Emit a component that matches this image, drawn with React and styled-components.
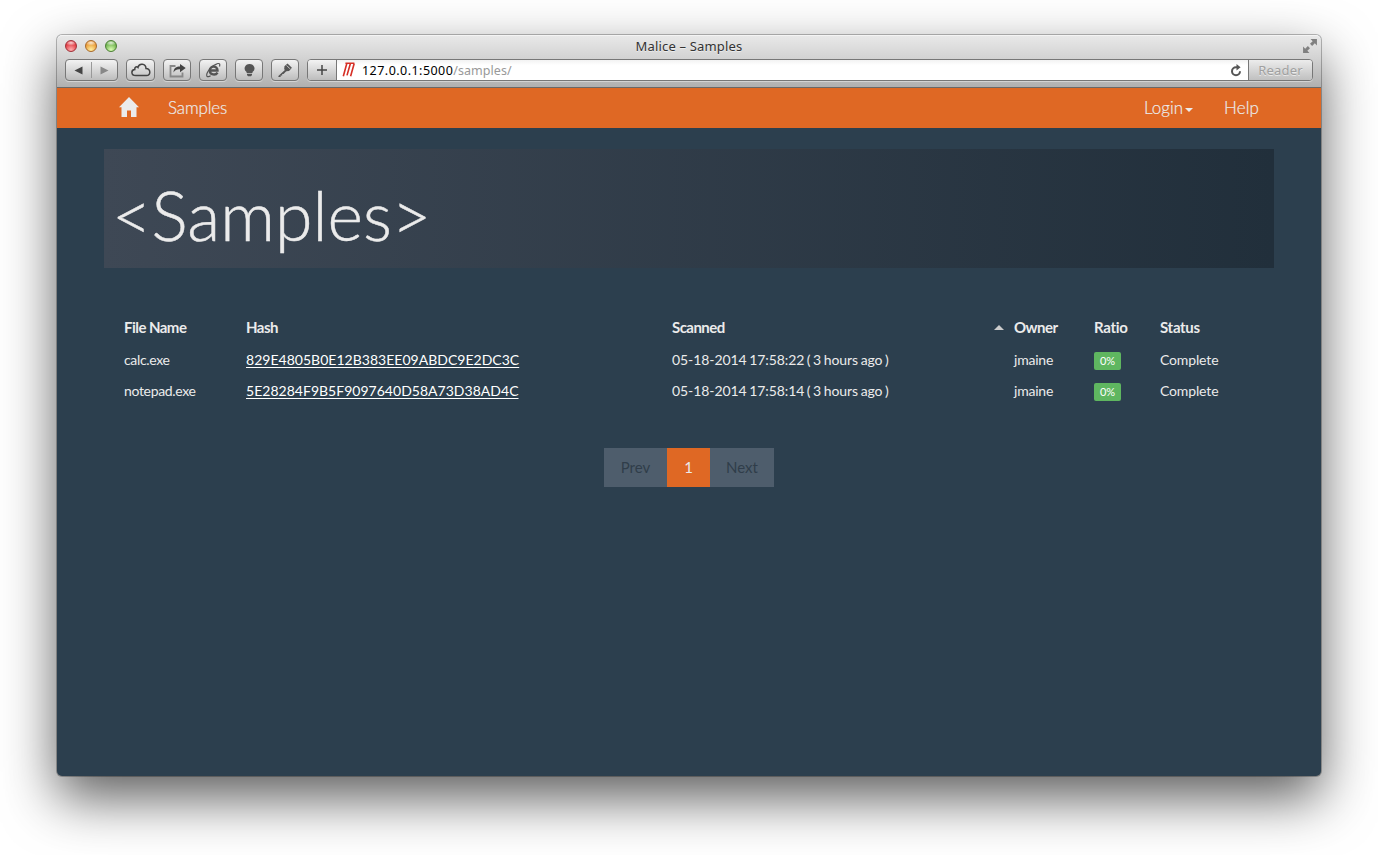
import React from "react";
import styled, { createGlobalStyle } from "styled-components";

const GlobalStyle = createGlobalStyle`
  * { box-sizing: border-box; }
  html, body { margin: 0; background: #fff; }
  body { overflow: hidden; }
`;

const Desktop = styled.div`
  width: 1378px;
  height: 855px;
  padding: 35px 57px 79px;
  overflow: hidden;
  background: #fff;
`;

const Window = styled.div`
  display: flex;
  flex-direction: column;
  height: 741px;
  border-radius: 5px;
  background: #2c3f4e;
  box-shadow: 0 0 0 1px rgba(0, 0, 0, 0.26), 0 22px 54px rgba(0, 0, 0, 0.64);
`;

const Chrome = styled.header`
  flex: none;
  height: 53px;
  padding: 0 8px;
  border-radius: 5px 5px 0 0;
  border-bottom: 1px solid #696969;
  box-shadow: inset 0 1px 0 #f4f4f4;
  background: linear-gradient(#e9e9e9, #d2d2d2 46%, #b0b0b0);
  font-family: "Noto Sans", sans-serif;
`;

const TitleBar = styled.div`
  display: grid;
  grid-template-columns: 1fr auto 1fr;
  align-items: center;
  height: 24px;
`;

const Lights = styled.div`
  display: flex;
  gap: 8px;
  margin-top: -2px;
`;

const Light = styled.i`
  width: 12px;
  height: 12px;
  border-radius: 50%;
  border: 1px solid ${(p) => p.$edge};
  background: radial-gradient(ellipse 60% 28% at 50% 18%, #fffc, #fff0),
    radial-gradient(circle at 50% 88%, ${(p) => p.$glow}, ${(p) => p.$fill} 70%);
`;

const Title = styled.h1`
  margin: -2px 0 0;
  font-size: 13px;
  line-height: 20px;
  font-weight: 400;
  letter-spacing: 0.17px;
  color: #333;
  text-shadow: 0 1px 0 #fff8;
`;

const Expand = styled.svg`
  justify-self: end;
  margin: -3px -5px 0 0;
`;

const Toolbar = styled.div`
  display: flex;
  gap: 8px;
`;

const ToolButton = styled.span`
  display: flex;
  align-items: center;
  justify-content: center;
  width: ${(p) => p.$w || 28}px;
  height: 22px;
  border: 1px solid #777;
  border-radius: 4px;
  background: linear-gradient(#f3f3f3, #bdbdbd);
  box-shadow: 0 1px 0 #ffffff66;
`;

const Address = styled.div`
  display: flex;
  flex: 1;
  height: 22px;
  border: 1px solid #777;
  border-radius: 4px;
  overflow: hidden;
  background: linear-gradient(#f2f2f2, #fff 5px);
  box-shadow: 0 1px 0 #ffffff66;
`;

const AddTab = styled.span`
  display: flex;
  align-items: center;
  justify-content: center;
  width: 29px;
  border-right: 1px solid #777;
  background: linear-gradient(#f3f3f3, #bdbdbd);
`;

const Url = styled.span`
  display: flex;
  flex: 1;
  align-items: center;
  padding: 1px 6px 0 5px;
  font-size: 12.5px;
  line-height: 18px;
  color: #000;
  white-space: pre;

  svg:first-child { margin: -2px 6px 0 0; }
  svg:last-child { margin-left: auto; }
`;

const Host = styled.span`
  letter-spacing: 0.46px;
`;

const Path = styled.span`
  color: #999;
  letter-spacing: 0.04px;
`;

const Reader = styled.span`
  width: 64px;
  border-left: 1px solid #777;
  background: linear-gradient(#ececec, #c0c0c0);
  color: #a0a0a0;
  font-size: 13px;
  line-height: 20px;
  letter-spacing: 0.2px;
  text-align: center;
  text-shadow: 0 1px 0 #fff9;
`;

const Page = styled.main`
  font-family: Lato, sans-serif;
  color: #ebebeb;
`;

const Nav = styled.nav`
  display: flex;
  align-items: center;
  height: 40px;
  padding: 0 62px;
  background: #df6824;
  font-size: 17px;
  font-weight: 300;
  line-height: 40px;
`;

const NavLink = styled.a`
  display: flex;
  align-items: center;
  margin-left: ${(p) => p.$left || 0};
  letter-spacing: ${(p) => p.$track || 0}px;
  -webkit-text-stroke: 0.2px #ebebeb;
`;

const HomeIcon = styled.svg`
  margin-top: -2px;
`;

const Caret = styled.i`
  margin: ${(p) => (p.$up ? 1 : 4)}px 0 0 ${(p) => p.$gap || 0}px;
  border-style: solid;
  border-color: ${(p) => (p.$up ? "transparent transparent #ccc" : "#ebebeb transparent transparent")};
  border-width: ${(p) => (p.$up ? "0 5px 5px" : "4px 4px 0")};
`;

const Container = styled.div`
  padding: 21px 47px 0;
`;

const Hero = styled.section`
  height: 119px;
  padding: 28px 8px 0;
  background: linear-gradient(90deg, #3e4855, #212f3b);
`;

const Heading = styled.h2`
  margin: 0;
  font-size: 68px;
  line-height: 75px;
  font-weight: 300;
  -webkit-text-stroke: 0.5px #ebebeb;
`;

const Table = styled.table`
  width: 1130px;
  margin: 43px 20px 0;
  border-collapse: collapse;
  table-layout: fixed;
  font-size: 14px;
  line-height: 20px;
  text-align: left;
`;

const HeadCell = styled.th`
  width: ${(p) => p.$w}px;
  height: 33px;
  padding: 0 0 2px;
  font-size: 15px;
  font-weight: 700;
  letter-spacing: ${(p) => p.$track || -0.54}px;
`;

const Sortable = styled.span`
  display: flex;
  align-items: center;
  justify-content: space-between;
  padding-right: 10px;
`;

const Cell = styled.td`
  height: 31px;
  padding: 0;
  white-space: pre;
  letter-spacing: ${(p) => p.$track || 0}px;
  word-spacing: ${(p) => p.$word || 0}px;
`;

const HashLink = styled.a`
  color: #fff;
  text-decoration: underline;
  text-underline-offset: 2px;
  text-decoration-skip-ink: none;
`;

const Badge = styled.span`
  display: inline-block;
  width: 27px;
  height: 18px;
  margin-top: 2px;
  vertical-align: middle;
  border-radius: 2px;
  background: #5fb660;
  color: #fff;
  font-size: 11px;
  line-height: 18px;
  text-align: center;
`;

const Pager = styled.div`
  display: flex;
  justify-content: center;
  margin-top: 42px;
  font-size: 15px;
  line-height: 39px;
  text-align: center;
`;

const PageItem = styled.span`
  width: ${(p) => p.$w}px;
  height: 39px;
  background: ${(p) => (p.$active ? "#df6824" : "#4e5d6c")};
  color: ${(p) => (p.$active ? "#ebebeb" : "#303d4a")};
`;

const samples = [
  ["calc.exe", "829E4805B0E12B383EE09ABDC9E2DC3C", "05-18-2014 17:58:22 ( 3 hours ago )"],
  ["notepad.exe", "5E28284F9B5F9097640D58A73D38AD4C", "05-18-2014 17:58:14 ( 3 hours ago )"],
];

const Triangle = ({ flip, color }) => (
  <svg width="9" height="9" viewBox="0 0 9 9">
    <path d={flip ? "M.5 .5 8.5 4.5 .5 8.5Z" : "M8.5 .5 .5 4.5 8.5 8.5Z"} fill={color} />
  </svg>
);

const Divider = styled.i`
  width: 1px;
  height: 16px;
  margin: 0 8px;
  background: #999;
`;

export default function App() {
  return (
    <Desktop>
      <GlobalStyle />
      <Window>
        <Chrome>
          <TitleBar>
            <Lights>
              <Light $edge="#a03038" $fill="#df343c" $glow="#ffb0b0" />
              <Light $edge="#a8692a" $fill="#e8952f" $glow="#fff0a0" />
              <Light $edge="#4b7f34" $fill="#69ae48" $glow="#dcffb5" />
            </Lights>
            <Title>Malice – Samples</Title>
            <Expand width="16" height="16" viewBox="0 0 15 15" fill="#808080">
              <path d="M8 1h6v6l-2-2-2.5 2.5-2-2L10 3Z M7 14H1V8l2 2 2.5-2.5 2 2L5 12Z" />
            </Expand>
          </TitleBar>
          <Toolbar>
            <ToolButton $w={53}>
              <Triangle color="#444" />
              <Divider />
              <Triangle flip color="#888" />
            </ToolButton>
            <ToolButton $w={29}>
              <svg width="20" height="14" viewBox="0 0 20 14" fill="none" stroke="#444" strokeWidth="1.5">
                <path d="M4.7 12.6C-.2 12.6-.2 7 3.8 6.6 3.4 3.9 6 3.2 7 4.4 8-.2 14.8.3 15 5.4c4.8.1 5.2 7.2.4 7.2Z" />
              </svg>
            </ToolButton>
            <ToolButton>
              <svg width="17" height="15" viewBox="0 0 17 15" fill="none">
                <path d="M6.5 3H1.5v10.5h12V9.5" stroke="#888" strokeWidth="1.8" />
                <path d="M4.5 9.5C4.8 5 7.3 3.6 11 3.6V1L16.7 5l-5.7 4.2V6.3C8 6.1 6 7 4.5 9.5Z" fill="#444" />
              </svg>
            </ToolButton>
            <ToolButton>
              <svg width="17" height="16" viewBox="0 0 17 16" fill="none" stroke="#555">
                <path d="M5.2 8.5h7.3C12.6 3.2 4.8 3.4 4.8 8.4c0 4.8 6 5.2 7.7 2.2" strokeWidth="2.4" />
                <path d="M14.5 4.5c.8-2.4.2-3.6-2.6-2.7C6.8 3.2.5 11.2 1.9 14.1c.6 1 2.3.6 3.7-.3" strokeWidth="1.2" />
              </svg>
            </ToolButton>
            <ToolButton>
              <svg width="11" height="14" viewBox="0 0 11 14" fill="#555">
                <path d="M5.5 1a4.9 4.5 0 0 1 3 8.1v1H2.6v-1A4.9 4.5 0 0 1 5.5 1ZM3 10.8h5v1.3l-1 1.1H4l-1-1.1Z" />
              </svg>
            </ToolButton>
            <ToolButton>
              <svg width="16" height="15" viewBox="0 0 16 15">
                <path d="M7.4 3.2 10.5.4l4.4 4.4-2.8 3.3-3 .2-1.9-2Z" fill="#555" />
                <path d="m8.8 6.3-2.3 2L1.4 13v1h2.2v-1.4h1.6v-1.5h1.3l3-3" fill="#555" />
                <path d="m9.6 2.4 3.4 3.4" stroke="#ccc" strokeWidth="1" />
              </svg>
            </ToolButton>
            <Address>
              <AddTab>
                <svg width="10" height="10" viewBox="0 0 10 10" stroke="#444" strokeWidth="1.5">
                  <path d="M5 0v10M0 5h10" />
                </svg>
              </AddTab>
              <Url>
                <svg width="14" height="17" viewBox="0 0 14 17" fill="none" stroke="#d62f26" strokeWidth="1.6">
                  <path d="M3.4 2.3h9M4.8 2.5 1.3 15.3M8.4 2.5 5 14.4M12.2 2.5 8.6 15.3" />
                </svg>
                <Host>127.0.0.1:5000</Host>
                <Path>/samples/</Path>
                <svg width="12" height="13" viewBox="0 0 12 13" fill="none">
                  <path d="M8.2 3.2H6a4 4 0 1 0 4 4" stroke="#555" strokeWidth="2" />
                  <path d="M6.5 0 10.6 3.2 6.5 6.4Z" fill="#555" />
                </svg>
              </Url>
              <Reader>Reader</Reader>
            </Address>
          </Toolbar>
        </Chrome>
        <Page>
          <Nav>
            <NavLink>
              <HomeIcon width="20" height="20" viewBox="0 0 20 20" fill="#ebebeb">
                <path d="M10 0 20 10.3h-2.5V20H12v-6.5H8V20H2.5v-9.7H0L10 0Z" />
              </HomeIcon>
            </NavLink>
            <NavLink $left="29px" $track={-0.15}>Samples</NavLink>
            <NavLink $left="auto">
              Login
              <Caret $gap={2} />
            </NavLink>
            <NavLink $left="31px" $track={0.1}>Help</NavLink>
          </Nav>
          <Container>
            <Hero>
              <Heading>&lt;Samples&gt;</Heading>
            </Hero>
            <Table>
              <thead>
                <tr>
                  <HeadCell $w={122}>File Name</HeadCell>
                  <HeadCell $w={426}>Hash</HeadCell>
                  <HeadCell $w={342}>
                    <Sortable>
                      Scanned
                      <Caret $up />
                    </Sortable>
                  </HeadCell>
                  <HeadCell $w={80}>Owner</HeadCell>
                  <HeadCell $w={66} $track={-0.3}>Ratio</HeadCell>
                  <HeadCell $w={94} $track={-0.3}>Status</HeadCell>
                </tr>
              </thead>
              <tbody>
                {samples.map(([name, hash, scanned]) => (
                  <tr key={hash}>
                    <Cell $track={-0.34}>{name}</Cell>
                    <Cell $track={0.02}>
                      <HashLink>{hash}</HashLink>
                    </Cell>
                    <Cell $track={-0.08} $word={-0.9}>{scanned}</Cell>
                    <Cell $track={-0.22}>jmaine</Cell>
                    <Cell>
                      <Badge>0%</Badge>
                    </Cell>
                    <Cell $track={-0.14}>Complete</Cell>
                  </tr>
                ))}
              </tbody>
            </Table>
            <Pager>
              <PageItem $w={63}>Prev</PageItem>
              <PageItem $w={43} $active>1</PageItem>
              <PageItem $w={64}>Next</PageItem>
            </Pager>
          </Container>
        </Page>
      </Window>
    </Desktop>
  );
}
